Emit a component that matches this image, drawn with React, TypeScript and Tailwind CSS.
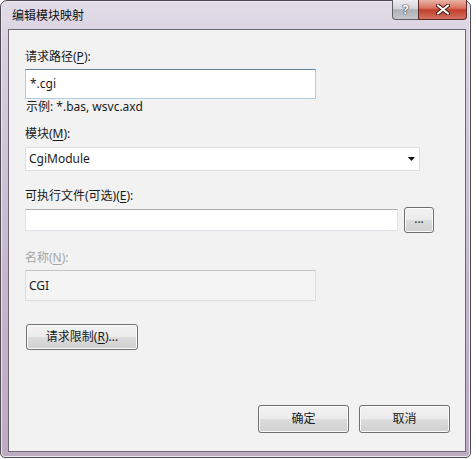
import React from "react";

const FONT = "font-[family-name:'Noto_Sans','Noto_Sans_CJK_SC',sans-serif]";

const BTN =
  "rounded-[3px] border border-[#707070] bg-[linear-gradient(to_bottom,#f2f2f2_0%,#ebebeb_50%,#dddddd_50%,#cfcfcf_100%)] shadow-[inset_0_0_0_1px_#fbfbfb] text-[12px] text-[#1a1a1a] flex items-center justify-center";

function Acc({ k }: { k: string }) {
  return <span className="underline underline-offset-2 decoration-1">{k}</span>;
}

function Label({ children, dim }: { children: React.ReactNode; dim?: boolean }) {
  return (
    <div className={`leading-[16px] text-[12px] ${dim ? "text-[#a6a6a6]" : "text-[#1a1a1a]"}`}>
      {children}
    </div>
  );
}

export default function App() {
  return (
    <div className={`w-[476px] h-[459px] bg-white ${FONT}`}>
      {/* window frame */}
      <div className="w-[471px] h-[458px] flex flex-col rounded-t-[7px] rounded-b-[5px] border border-[#4e4a52] bg-[linear-gradient(to_bottom,#e2dce8_0%,#d8cfdf_10%,#c6b7cd_60%,#bcabc3_100%)] shadow-[inset_0_0_0_1px_#ece7f0]">
        {/* title bar */}
        <div className="h-[28px] flex items-start justify-between">
          <div className="pl-[11px] pt-[7px] text-[12px] leading-[16px] text-[#111]">编辑模块映射</div>
          <div className="flex mr-[3px] -mt-px">
            <div className="w-[26px] h-[20px] rounded-bl-[4px] border border-t-0 border-r-0 border-[#5e5d66] bg-[linear-gradient(to_bottom,#eeeef2_0%,#d2d3d9_45%,#aeb0b8_52%,#c4c6cc_100%)] flex items-center justify-center">
              <span className="text-[13px] font-bold leading-none text-white [text-shadow:0_0_1px_#333,0_0_1px_#333,0_0_1px_#333]">?</span>
            </div>
            <div className="w-[49px] h-[20px] rounded-br-[4px] border border-t-0 border-[#5a2a26] bg-[linear-gradient(to_bottom,#eab3a6_0%,#d9735f_42%,#c2402d_52%,#d2705f_100%)] flex items-center justify-center">
              <svg width="14" height="11" viewBox="0 0 14 11">
                <path d="M2 1.5 L12 9.5 M12 1.5 L2 9.5" stroke="#3d1712" strokeWidth="4" strokeLinecap="round" />
                <path d="M2 1.5 L12 9.5 M12 1.5 L2 9.5" stroke="#ffffff" strokeWidth="2.2" strokeLinecap="round" />
              </svg>
            </div>
          </div>
        </div>

        {/* client area */}
        <div className="flex-1 ml-[7px] mr-[4px] mb-[5px] border border-[#6f6874] bg-[#f2f2f2] flex flex-col pl-[16px] pr-[15px] pt-[19px]">
          <Label>
            请求路径(<Acc k="P" />):
          </Label>
          <div className="mt-[4px] w-[291px] h-[30px] bg-white border border-[#b3cde0] border-t-[#5f8097] flex items-center pl-[4px] text-[12px] text-[#1a1a1a]">
            *.cgi
          </div>
          <div className="mt-px leading-[14px] text-[12px] text-[#1a1a1a] pl-[1px]">示例: *.bas, wsvc.axd</div>

          <div className="mt-[12px]">
            <Label>
              模块(<Acc k="M" />):
            </Label>
          </div>
          <div className="mt-[5px] w-[395px] h-[24px] bg-white border border-[#dedede] flex items-center justify-between pl-[3px] pr-[4px] text-[12px] text-[#1a1a1a]">
            <span>CgiModule</span>
            <svg width="7" height="4" viewBox="0 0 7 4">
              <polygon points="0,0 7,0 3.5,4" fill="#111" />
            </svg>
          </div>

          <div className="mt-[17px]">
            <Label>
              可执行文件(可选)(<Acc k="E" />):
            </Label>
          </div>
          <div className="mt-[3px] h-[26px] flex items-center">
            <div className="w-[373px] h-[22px] bg-white border border-[#e2e3ea] border-t-[#abadb3]" />
            <div className={`ml-[6px] w-[30px] h-[26px] ${BTN} items-end pb-[7px] leading-none`}>...</div>
          </div>

          <div className="mt-[17px]">
            <Label dim>
              名称(<Acc k="N" />):
            </Label>
          </div>
          <div className="mt-[4px] w-[291px] h-[31px] bg-[#f4f4f4] border border-[#dcdcdc] border-t-[#c4c4c4] flex items-center pl-[3px] text-[12px] text-[#1a1a1a]">
            CGI
          </div>

          <div className={`mt-[23px] ml-px w-[112px] h-[26px] ${BTN}`}>
            请求限制(<Acc k="R" />)...
          </div>

          <div className="mt-auto pb-[18px] flex justify-end gap-[10px]">
            <div className={`${BTN} w-[91px] h-[28px] border-[#3c7fb1] shadow-[inset_0_0_0_1px_#9ee0f2]`}>确定</div>
            <div className={`${BTN} w-[91px] h-[28px]`}>取消</div>
          </div>
        </div>
      </div>
    </div>
  );
}
